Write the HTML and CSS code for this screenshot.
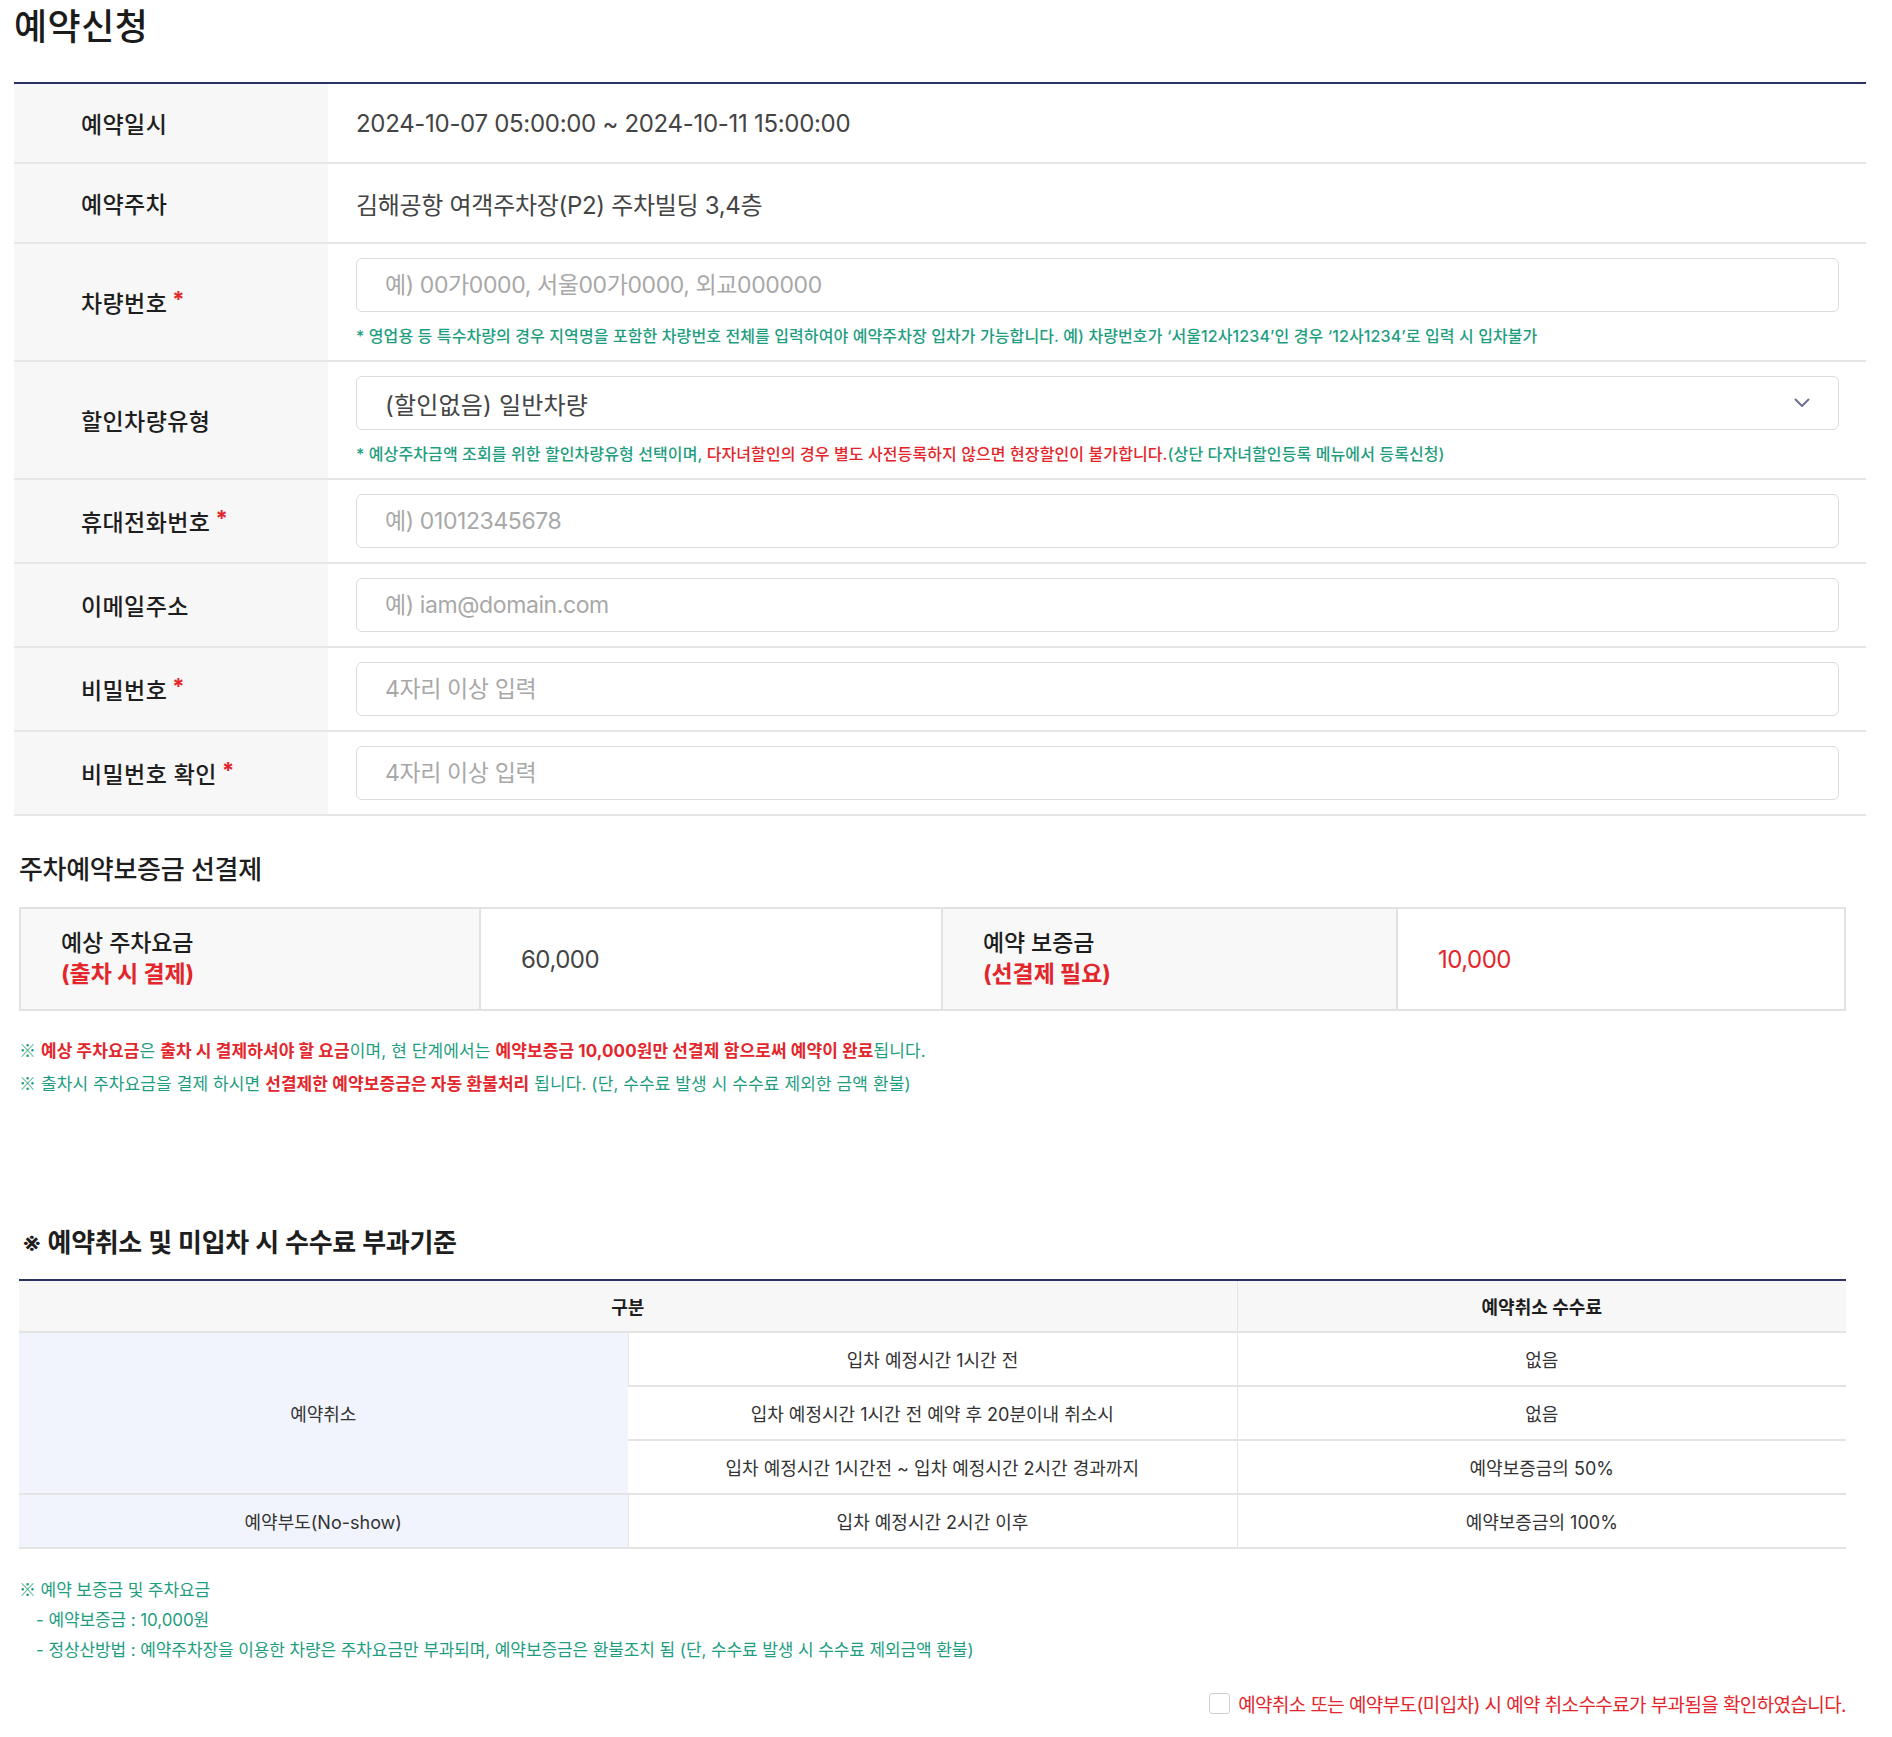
FILE: index.html
```html
<!DOCTYPE html>
<html lang="ko">
<head>
<meta charset="utf-8">
<title>예약신청</title>
<link rel="stylesheet" href="styles.css">
</head>
<body>
<div class="page">
  <h1 class="title">예약신청</h1>

  <div class="form">
    <div class="row">
      <div class="label">예약일시</div>
      <div class="value text">2024-10-07 05:00:00 ~ 2024-10-11 15:00:00</div>
    </div>
    <div class="row">
      <div class="label">예약주차</div>
      <div class="value text">김해공항 여객주차장(P2) 주차빌딩 3,4층</div>
    </div>
    <div class="row">
      <div class="label">차량번호<span class="req">*</span></div>
      <div class="value">
        <input class="field" type="text" placeholder="예) 00가0000, 서울00가0000, 외교000000">
        <p class="help">* 영업용 등 특수차량의 경우 지역명을 포함한 차량번호 전체를 입력하여야 예약주차장 입차가 가능합니다. 예) 차량번호가 ‘서울12사1234’인 경우 ‘12사1234’로 입력 시 입차불가</p>
      </div>
    </div>
    <div class="row">
      <div class="label">할인차량유형</div>
      <div class="value">
        <div class="select">
          <span>(할인없음) 일반차량</span>
          <svg class="chev" width="16" height="10" viewBox="0 0 16 10"><path d="M1.5 1.5 L8 8 L14.5 1.5" fill="none" stroke="#6c7191" stroke-width="2" stroke-linecap="round" stroke-linejoin="round"/></svg>
        </div>
        <p class="help">* 예상주차금액 조회를 위한 할인차량유형 선택이며, <span class="red">다자녀할인의 경우 별도 사전등록하지 않으면 현장할인이 불가합니다.</span>(상단 다자녀할인등록 메뉴에서 등록신청)</p>
      </div>
    </div>
    <div class="row">
      <div class="label">휴대전화번호<span class="req">*</span></div>
      <div class="value"><input class="field" type="text" placeholder="예) 01012345678"></div>
    </div>
    <div class="row">
      <div class="label">이메일주소</div>
      <div class="value"><input class="field" type="text" placeholder="예) iam@domain.com"></div>
    </div>
    <div class="row">
      <div class="label">비밀번호<span class="req">*</span></div>
      <div class="value"><input class="field" type="password" placeholder="4자리 이상 입력"></div>
    </div>
    <div class="row">
      <div class="label">비밀번호 확인<span class="req">*</span></div>
      <div class="value"><input class="field" type="password" placeholder="4자리 이상 입력"></div>
    </div>
  </div>

  <section class="section">
    <h2 class="sub">주차예약보증금 선결제</h2>
    <div class="deposit">
      <div class="dcell dlabel">예상 주차요금<br><strong class="red">(출차 시 결제)</strong></div>
      <div class="dcell dvalue">60,000</div>
      <div class="dcell dlabel">예약 보증금<br><strong class="red">(선결제 필요)</strong></div>
      <div class="dcell dvalue red">10,000</div>
    </div>
    <div class="notes">
      <p><span class="mark">※</span> <b class="red">예상 주차요금</b>은 <b class="red">출차 시 결제하셔야 할 요금</b>이며, 현 단계에서는 <b class="red">예약보증금 10,000원만 선결제 함으로써 예약이 완료</b>됩니다.</p>
      <p><span class="mark">※</span> 출차시 주차요금을 결제 하시면 <b class="red">선결제한 예약보증금은 자동 환불처리</b> 됩니다. (단, 수수료 발생 시 수수료 제외한 금액 환불)</p>
    </div>
  </section>

  <section class="section fee-section">
    <h2 class="sub bold">※ 예약취소 및 미입차 시 수수료 부과기준</h2>
    <table class="fee">
      <thead>
        <tr><th colspan="2">구분</th><th>예약취소 수수료</th></tr>
      </thead>
      <tbody>
        <tr><td class="cat" rowspan="3">예약취소</td><td>입차 예정시간 1시간 전</td><td>없음</td></tr>
        <tr><td>입차 예정시간 1시간 전 예약 후 20분이내 취소시</td><td>없음</td></tr>
        <tr><td>입차 예정시간 1시간전 ~ 입차 예정시간 2시간 경과까지</td><td>예약보증금의 50%</td></tr>
        <tr><td class="cat">예약부도(No-show)</td><td>입차 예정시간 2시간 이후</td><td>예약보증금의 100%</td></tr>
      </tbody>
    </table>
    <div class="notes2">
      <p><span class="mark">※</span> 예약 보증금 및 주차요금</p>
      <p class="ind">- 예약보증금 : 10,000원</p>
      <p class="ind">- 정상산방법 : 예약주차장을 이용한 차량은 주차요금만 부과되며, 예약보증금은 환불조치 됨 (단, 수수료 발생 시 수수료 제외금액 환불)</p>
    </div>
    <label class="agree">
      <input type="checkbox" class="chk">
      <span>예약취소 또는 예약부도(미입차) 시 예약 취소수수료가 부과됨을 확인하였습니다.</span>
    </label>
  </section>
</div>
</body>
</html>
```

FILE: styles.css
```css
* { box-sizing: border-box; }
html, body { margin: 0; padding: 0; background: #fff; }
body {
  font-family: Inter, "Noto Sans CJK KR", "Noto Sans", sans-serif;
  color: #222;
}
.page { padding: 0 26px 20px 14px; }

.title {
  margin: 0;
  height: 82px;
  line-height: 54px;
  font-size: 36px;
  font-weight: 500;
  letter-spacing: 0.5px;
  color: #1b1b1b;
}

.form { border-top: 2px solid #2c3263; }
.row {
  display: grid;
  grid-template-columns: 314px 1fr;
  border-bottom: 2px solid #e6e6e6;
}
.label {
  background: #f7f7f7;
  display: flex;
  align-items: center;
  padding-left: 67px;
  font-size: 23px;
  font-weight: 500;
  letter-spacing: 0.4px;
  color: #1e1e1e;
}
.req { color: #e3262c; margin-left: 5px; font-weight: 700; font-size: 22px; position: relative; top: -3px; }
.value { padding: 14px 27px 14px 28px; }
.value.text {
  display: flex;
  align-items: center;
  min-height: 78px;
  padding-top: 0;
  padding-bottom: 0;
  font-size: 24px;
  color: #444;
  letter-spacing: -0.3px;
}
.field, .select {
  display: flex;
  align-items: center;
  width: 100%;
  height: 54px;
  border: 1.5px solid #dcdcdc;
  border-radius: 6px;
  padding: 0 28px;
  font-family: inherit;
  font-size: 23px;
  letter-spacing: -0.4px;
  color: #444;
  background: #fff;
  outline: none;
}
.field::placeholder { color: #a8a8a8; }
.select { justify-content: space-between; padding-right: 28px; font-size: 24px; letter-spacing: 0.2px; }
.select span { color: #444; }
.chev { display: block; }
.help {
  margin: 14px 0 0;
  line-height: 20px;
  font-size: 16px;
  font-weight: 500;
  letter-spacing: 0.1px;
  color: #1f9e7f;
}
.red { color: #e3262c; }

.section { padding: 0 20px 0 5px; }
.sub {
  margin: 36px 0 19px;
  line-height: 36px;
  font-size: 26px;
  font-weight: 500;
  letter-spacing: -0.3px;
  color: #1e1e1e;
}
.sub.bold { font-weight: 600; margin: 0 0 18px 3px; letter-spacing: -0.3px; }

.deposit {
  display: grid;
  grid-template-columns: 459fr 463fr 456fr 449fr;
  border: 2px solid #e2e2e2;
}
.dcell {
  display: flex;
  align-items: center;
  padding: 19px 40px;
  min-height: 100px;
}
.dcell + .dcell { border-left: 2px solid #e2e2e2; }
.dlabel {
  display: block;
  background: #f8f8f8;
  font-size: 23px;
  line-height: 31px;
  font-weight: 500;
  letter-spacing: -0.1px;
  color: #1e1e1e;
}
.dlabel strong { font-weight: 700; }
.dvalue { font-size: 24px; color: #444; letter-spacing: -0.5px; }
.dvalue.red { color: #e3262c; }

.mark { font-family: "Noto Sans CJK KR", sans-serif; font-weight: 300; }

.notes { margin-top: 23px; }
.notes p {
  margin: 0;
  line-height: 31px;
  font-size: 17px;
  letter-spacing: 0.1px;
  color: #1f9e7f;
}
.notes b { font-weight: 700; }

.fee-section { margin-top: 125px; }
.fee {
  width: 100%;
  border-collapse: collapse;
  table-layout: fixed;
  border-top: 2px solid #2c3263;
}
.fee th, .fee td {
  height: 54px;
  text-align: center;
  font-size: 18px;
  letter-spacing: 0;
  color: #333;
  border-bottom: 2px solid #e4e4e4;
  padding: 0;
}
.fee th {
  height: 52px;
  background: #f7f7f7;
  font-weight: 600;
  color: #1e1e1e;
}
.fee th + th, .fee td + td, .fee td.cat + td { border-left: 1px solid #e4e4e4; }
.fee td { font-weight: 400; }
.fee td.cat { background: #f1f4fd; }

.notes2 { margin-top: 25px; }
.notes2 p {
  margin: 0;
  line-height: 30px;
  font-size: 17px;
  letter-spacing: -0.1px;
  color: #1f9e7f;
}
.notes2 .ind { padding-left: 17px; }

.agree {
  display: flex;
  justify-content: flex-end;
  align-items: center;
  gap: 8px;
  margin-top: 25px;
  font-size: 19px;
  letter-spacing: -0.6px;
  color: #e3262c;
}
.chk {
  appearance: none;
  -webkit-appearance: none;
  width: 21px;
  height: 21px;
  margin: 0;
  border: 1.5px solid #cfcfcf;
  border-radius: 3px;
  background: #fff;
}
```
